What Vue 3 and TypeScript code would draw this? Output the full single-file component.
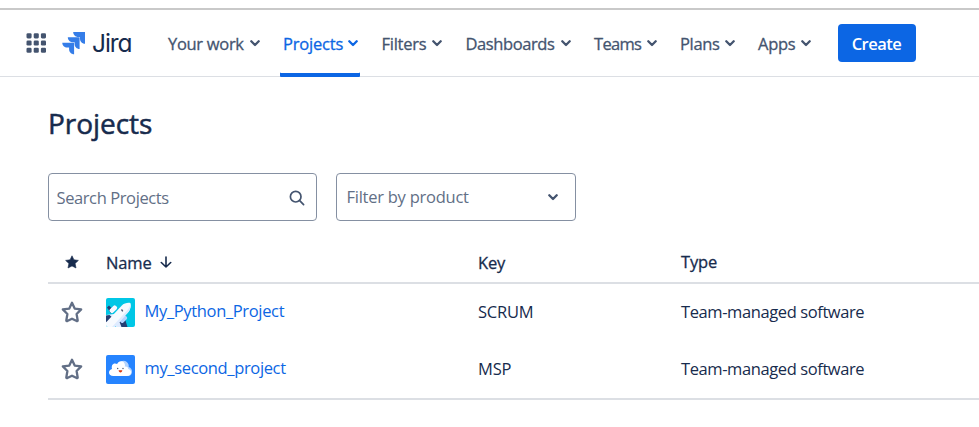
<script setup lang="ts">
interface NavItem {
  id: string
  label: string
  active?: boolean
}

interface Project {
  name: string
  key: string
  type: string
  avatar: 'plane' | 'cloud'
}

const navItems: NavItem[] = [
  { id: 'work', label: 'Your work' },
  { id: 'projects', label: 'Projects', active: true },
  { id: 'filters', label: 'Filters' },
  { id: 'dashboards', label: 'Dashboards' },
  { id: 'teams', label: 'Teams' },
  { id: 'plans', label: 'Plans' },
  { id: 'apps', label: 'Apps' },
]

const projects: Project[] = [
  { name: 'My_Python_Project', key: 'SCRUM', type: 'Team-managed software', avatar: 'plane' },
  { name: 'my_second_project', key: 'MSP', type: 'Team-managed software', avatar: 'cloud' },
]
</script>

<template>
  <div class="page">
    <header class="topbar">
      <svg class="switcher" width="20" height="20" viewBox="0 0 20 20">
        <template v-for="r in 3" :key="r">
          <rect v-for="c in 3" :key="c" :x="(c - 1) * 7.2 + 0.5" :y="(r - 1) * 7.2 + 0.3" width="5.1" height="5.1" rx="1.3" fill="#44546f" />
        </template>
      </svg>
      <div class="brand">
        <svg width="24" height="24" viewBox="0 0 24 24" fill="#357de8">
          <path d="M11.2 1H23v11.7c-2.9 0-5-2.200-5-5V6h-1.800c-2.800 0-5-2.200-5-5z" />
          <path d="M5.800 6.300h11.800V18c-2.900 0-5-2.200-5-5v-1.700h-1.800c-2.800 0-5-2.200-5-5z" />
          <path d="M.3 11.700h11.800v11.600c-2.900 0-5-2.200-5-5v-1.700H5.300c-2.800 0-5-2.200-5-4.900z" />
        </svg>
        <span class="brand-name">Jira</span>
      </div>
      <nav class="nav">
        <a v-for="item in navItems" :key="item.id" class="nav-item" :class="[item.id, { active: item.active }]">
          <span class="nav-label">{{ item.label }}</span>
          <svg class="chevron" width="10" height="7" viewBox="0 0 10 7"><path d="M1.300 1.300 5 5l3.700-3.700" /></svg>
        </a>
      </nav>
      <button class="create" type="button"><span>Create</span></button>
    </header>

    <main class="content">
      <h1 class="title"><span>Projects</span></h1>
      <div class="filters-row">
        <div class="field search">
          <span class="search-label">Search Projects</span>
          <svg width="16" height="16" viewBox="0 0 16 16" fill="none" stroke="#44546f" stroke-width="1.700" stroke-linecap="round">
            <circle cx="6.700" cy="6.700" r="5.300" /><path d="m10.700 10.700 3.900 3.900" />
          </svg>
        </div>
        <div class="field product">
          <span class="product-label">Filter by product</span>
          <svg class="chevron" width="10" height="7" viewBox="0 0 10 7"><path d="M1.300 1.300 5 5l3.700-3.700" /></svg>
        </div>
      </div>

      <div class="table">
        <div class="row head">
          <div class="cell star">
            <svg width="14" height="14" viewBox="0 0 14 14"><path d="m7 .8 1.900 4 4.500.6-3.300 3 .9 4.600L7 10.900 3 13l.9-4.600-3.300-3 4.500-.6z" fill="#172b4d" stroke="#172b4d" stroke-width=".6" stroke-linejoin="round" /></svg>
          </div>
          <div class="cell name">
            <span class="th-name">Name</span>
            <svg class="arrow" width="12" height="12" viewBox="0 0 12 12" fill="none" stroke="#172b4d" stroke-width="1.600" stroke-linecap="round" stroke-linejoin="round"><path d="M6 1v10M1.300 6.500 6 11l4.700-4.500" /></svg>
          </div>
          <div class="cell key"><span class="th-key">Key</span></div>
          <div class="cell type"><span class="th-type">Type</span></div>
        </div>
        <div v-for="p in projects" :key="p.key" class="row" :class="p.avatar">
          <div class="cell star">
            <svg class="outline-star" width="22" height="22" viewBox="0 0 22 22"><path d="m11 1.700 2.700 5.900 6.500.8-4.600 4.600 1.100 6.500c0 .6-.5.800-1 .6L11 17.700l-4.700 2.400c-.5.200-1 0-1-.6L6.400 13 1.800 8.400l6.500-.8z" fill="none" stroke="#626f86" stroke-width="2.300" stroke-linejoin="round" /></svg>
          </div>
          <div class="cell name">
            <svg v-if="p.avatar === 'plane'" class="avatar" width="29" height="29" viewBox="0 0 29 29">
              <rect width="29" height="29" fill="#00c7e6" />
              <path d="M0 17 11.500 15.500l-5 7L0 26z" fill="#deebff" />
              <path d="M0 17.500 3.500 17l3.500 3-3.500 3.500L0 24z" fill="#253f73" />
              <path d="m9 26 5-7 3.500 3-2 7H10z" fill="#deebff" />
              <path d="m13.500 24 5.500-3 2.500 8h-6z" fill="#253f73" />
              <path d="m1 9.500 2-2 5 5-3 3z" fill="#253f73" />
              <rect x="-4.200" y="-2.300" width="8.400" height="4.600" rx="1.800" transform="translate(7.300 11.200) rotate(-45)" fill="#f4f7ff" />
              <rect x="-4" y="-2.200" width="8" height="4.400" rx="1.700" transform="translate(17.500 21.300) rotate(-45)" fill="#b3d4ff" />
              <path d="M2 29h6.500L22.400 14c2-2.500 2.900-6.500 2.100-8.800-2-.9-6.500.1-8.900 2.500L0 24.500V29z" fill="#f7faff" />
              <path d="M6 29h3L22.400 14c2-2.500 2.900-6.500 2.100-8.800-.2 2.500-1.400 5-3.500 7.200z" fill="#deebff" />
              <path d="m15.500 11.500 1.300 1.800" stroke="#42526e" stroke-width="1.300" />
            </svg>
            <svg v-else class="avatar" width="29" height="29" viewBox="0 0 29 29">
              <rect width="29" height="29" fill="#2684ff" />
              <path d="M13 9c1-3 5-4.500 7.500-2.300 2 1.500 2.500 3.500 2.200 5.300 2.300.8 3.600 3 3.300 5.200-.3 2.500-2.300 3.900-4.700 3.900H15z" fill="#b3d4ff" />
              <path d="M7.300 21.100C4.700 21.100 3 19.600 3 17.500c0-1.900 1.300-3.200 3-3.500-.8-3.200.5-5.600 3-5.600.8 0 1.500.2 2.100.7C12 6.800 14 5.700 16 6.300c2.500.7 3.400 3.200 2.900 5.400 1.900-.5 3.400.8 3.300 2.400 1.800.4 3 1.700 2.900 3.500-.2 2.300-1.800 3.500-4.300 3.500z" fill="#fff" />
              <circle cx="11.700" cy="13.500" r=".7" fill="#42526e" /><circle cx="17" cy="13.500" r=".7" fill="#42526e" />
              <path d="M12.600 15.300h3.700c-.1 1.400-.8 2.100-1.800 2.100s-1.800-.7-1.900-2.100z" fill="#de350b" />
            </svg>
            <a class="link">{{ p.name }}</a>
          </div>
          <div class="cell key"><span class="td-key">{{ p.key }}</span></div>
          <div class="cell type"><span class="td-type">{{ p.type }}</span></div>
        </div>
      </div>
    </main>
  </div>
</template>

<style>
body {
  background: #fff;
}
</style>

<style scoped>
.page {
  box-sizing: border-box;
  width: 979px;
  height: 427px;
  padding-top: 8px;
  overflow: hidden;
  background: #fff;
  color: #172b4d;
  font: 400 16.5px/24px "Open Sans", "Noto Sans", sans-serif;
  white-space: nowrap;
}
.topbar {
  box-sizing: border-box;
  display: flex;
  align-items: center;
  height: 69px;
  border-top: 2px solid #c9c9c9;
  border-bottom: 1px solid #dcdfe4;
  padding-left: 26px;
}
.brand {
  display: flex;
  align-items: center;
  gap: 6px;
  width: 104px;
  margin-left: 16px;
}
.brand-name {
  font: 400 24.500px/30px Inter, sans-serif;
  font-feature-settings: "cv11";
  letter-spacing: -1.1px;
}
.nav {
  display: flex;
  align-self: stretch;
  gap: 18.500px;
  margin-left: -1px;
}
.nav-item {
  box-sizing: border-box;
  display: flex;
  align-items: center;
  justify-content: space-between;
  padding: 1px 2px 0 3px;
  color: #44546f;
}
.nav-item.active {
  margin-bottom: -1px;
  padding-bottom: 1px;
  color: #0c66e4;
  box-shadow: inset 0 -4px #0c66e4;
  border-radius: 1px;
}
.work { width: 96.500px; letter-spacing: -0.3px; }
.projects { width: 80px; letter-spacing: -0.2px; }
.filters { width: 65.500px; letter-spacing: -0.25px; }
.dashboards { width: 110px; letter-spacing: -0.4px; }
.teams { width: 67.500px; letter-spacing: -0.7px; }
.plans { width: 59.500px; letter-spacing: -0.35px; }
.apps { width: 58px; letter-spacing: -0.3px; }
.nav-label { -webkit-text-stroke: 0.3px currentColor; }
.chevron {
  flex: none;
  fill: none;
  stroke: #44546f;
  stroke-width: 2.3;
  stroke-linecap: round;
  stroke-linejoin: round;
}
.active .chevron { stroke: #0c66e4; }
.create {
  width: 78px;
  height: 38px;
  margin-left: 25px;
  padding: 2px 1px 0 0;
  border: 0;
  border-radius: 4px;
  background: #0c66e4;
  color: #fff;
  font: 600 16.5px/36px "Open Sans", sans-serif;
  letter-spacing: -0.5px;
}
.content {
  padding: 26px 0 0 48px;
}
.title {
  margin: 0;
  font-size: 28px;
  line-height: 40px;
  font-weight: 400;
  letter-spacing: -0.05px;
  -webkit-text-stroke: 0.5px currentColor;
}
.filters-row {
  display: flex;
  gap: 19px;
  margin-top: 30px;
}
.field {
  box-sizing: border-box;
  display: flex;
  align-items: center;
  justify-content: space-between;
  height: 48px;
  border: 1px solid #8590a2;
  border-radius: 4px;
  color: #626f86;
}
.search {
  width: 269px;
  padding: 1px 11px 0 7.500px;
}
.product {
  width: 240px;
  padding: 0 17px 0 9.500px;
}
.search-label { letter-spacing: -0.4px; }
.product-label { letter-spacing: -0.25px; }
.table {
  margin-top: 20px;
  border-bottom: 2px solid #dcdfe4;
}
.row {
  display: grid;
  grid-template-columns: 58px 372px 203px 1fr;
  align-items: center;
  height: 57px;
}
.head {
  height: 41px;
  border-bottom: 2px solid #dcdfe4;
  letter-spacing: -0.15px;
  -webkit-text-stroke: 0.3px currentColor;
}
.cell {
  display: flex;
  align-items: center;
}
.star {
  box-sizing: border-box;
  width: 48px;
  justify-content: center;
}
.outline-star { margin-bottom: 1px; }
.arrow { margin: 0 0 2px 8px; }
.head .key, .head .name { padding-top: 2px; }
.avatar {
  margin-right: 9.500px;
  border-radius: 2px;
}
.link {
  padding-bottom: 3px;
  color: #0c66e4;
  letter-spacing: -0.35px;
}
.td-key { letter-spacing: -0.2px; }
.td-key, .td-type { padding-bottom: 1px; }
.td-type { letter-spacing: -0.4px; }
</style>
